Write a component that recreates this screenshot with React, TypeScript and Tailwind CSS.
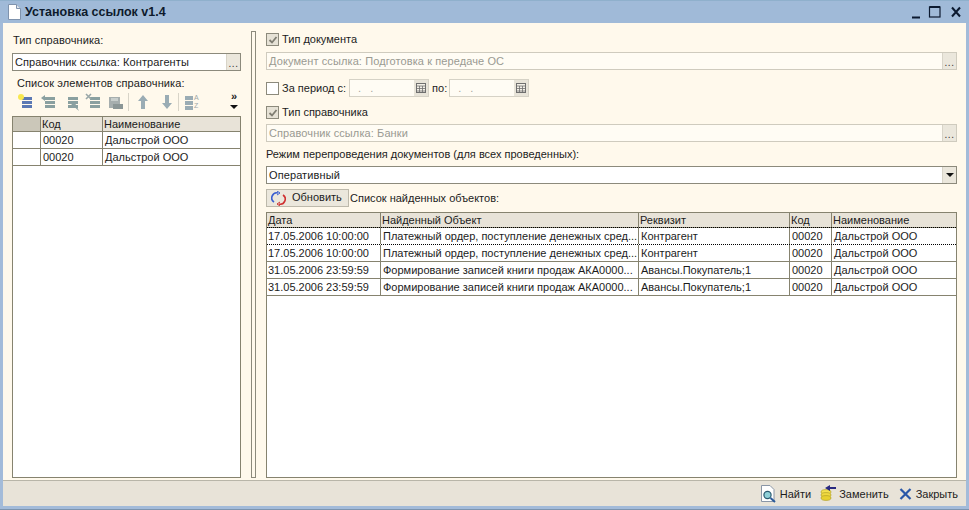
import React from "react";

const font = { fontFamily: '"Liberation Sans", Arial, sans-serif' };

function Dots() {
  return <span className="text-[10px] leading-none text-[#333] tracking-[0.5px] mt-[3px]">...</span>;
}

function Field({ text, muted, last }: { text: string; muted?: boolean; last?: React.ReactNode }) {
  return (
    <div className={`h-[18px] flex border ${muted ? "border-[#cfcbbe] bg-[#fffcf4] text-[#9a9a92]" : "bg-white text-[#1c1c1c] border-[#8c8a7c]"}`}>
      <div className="flex-1 pl-[2px] leading-[16px] tracking-[0.1px] whitespace-nowrap overflow-hidden">{text}</div>
      <div className="w-[14px] bg-[#ebe7dc] border-l border-[#d8d4c8] flex items-center justify-center">{last ?? <Dots />}</div>
    </div>
  );
}

function Check({ checked }: { checked?: boolean }) {
  return (
    <div className={`w-[13px] h-[13px] shrink-0 border border-[#8c8a7c] flex items-center justify-center ${checked ? "bg-[#e6e2d6]" : "bg-white"}`}>
      {checked && (
        <svg width="10" height="10" viewBox="0 0 10 10" fill="none" stroke="#7f7d72" strokeWidth="1.8">
          <path d="M1.5 5 L4 7.5 L8.5 2" />
        </svg>
      )}
    </div>
  );
}

function Calendar() {
  return (
    <svg width="10" height="10" viewBox="0 0 10 10" fill="none" stroke="#6f6f6f" strokeWidth="1">
      <rect x="0.5" y="0.5" width="9" height="9" fill="#f4f1e8" />
      <path d="M0 3H10M0 5.5H10M0 8H10M3.5 3V10M6.5 3V10" strokeWidth="0.8" />
    </svg>
  );
}

function DateField() {
  return (
    <div className="h-[18px] w-[80px] flex border border-[#d6d2c6] bg-[#fffcf4] text-[#a5a59d]">
      <div className="flex-1 pl-[8px] leading-[16px] tracking-[3px]">. .</div>
      <div className="w-[14px] bg-[#e8e4d9] flex items-center justify-center"><Calendar /></div>
    </div>
  );
}

function Bars({ color = "#8aa0a0" }: { color?: string }) {
  return <path d="M5 4H15V7H5ZM5 8H15V11H5ZM5 12H15V15H5Z" fill={color} />;
}

function Tb({ children, w = 16 }: { children: React.ReactNode; w?: number }) {
  return <svg width={w} height="18" viewBox={`0 0 ${w} 18`} className="shrink-0">{children}</svg>;
}

function Toolbar() {
  return (
    <div className="h-[20px] mt-[2px] flex items-center pl-[5px] relative">
      <Tb><Bars color="#5a78b4" /><circle cx="4" cy="4" r="3" fill="#f8e850" /></Tb>
      <div className="w-[7px]" />
      <Tb><Bars /><path d="M1 5L5 2V8Z" fill="#8aa0a0" /></Tb>
      <div className="w-[7px]" />
      <Tb><Bars /><path d="M8 11L16 18L12 10Z" fill="#8aa0a0" /></Tb>
      <div className="w-[6px]" />
      <Tb><Bars /><path d="M1 1L6 6M6 1L1 6" stroke="#9aa8a8" strokeWidth="1.6" /></Tb>
      <div className="w-[7px]" />
      <Tb w={16}><rect x="1" y="4" width="11" height="11" fill="#a6aeae" /><rect x="3" y="5" width="7" height="3" fill="#c8cecc" /><path d="M5 11H15V16H5Z" fill="#8b9696" /></Tb>
      <div className="w-[5px] h-[18px] mr-[7px] border-r border-[#d8d4c8]" />
      <Tb w={14}><path d="M7 2L12 8H9V16H5V8H2Z" fill="#9aacb4" /></Tb>
      <div className="w-[10px]" />
      <Tb w={14}><path d="M7 16L12 10H9V2H5V10H2Z" fill="#9aacb4" /></Tb>
      <div className="w-[5px] h-[18px] mr-[3px] border-r border-[#d8d4c8]" />
      <Tb w={19}><path d="M3 3H11V7H3ZM3 8H11V12H3ZM3 13H11V17H3Z" fill="#9aacb4" /><text x="12" y="7" fontSize="7" fill="#a0a8a8" style={font}>A</text><text x="12" y="15" fontSize="7" fill="#a0a8a8" style={font}>Z</text></Tb>
      <div className="absolute left-[217px] top-[-2px] w-[10px] flex flex-col items-center">
        <span className="text-[11px] font-bold leading-[12px] text-[#222]">»</span>
        <svg width="8" height="5" className="mt-[3px]"><path d="M0 0H8L4 4Z" fill="#111" /></svg>
      </div>
    </div>
  );
}

function LeftTable() {
  const rows = [["", "00020", "Дальстрой ООО"], ["", "00020", "Дальстрой ООО"]];
  return (
    <div className="flex-1 mt-[4px] mb-[2px] border border-[#86836f] bg-white">
      <div className="grid grid-cols-[28px_62px_1fr] h-[15px] bg-[#e8e3d8] border-b border-[#86836f] leading-[14px]">
        <div className="border-r border-[#86836f] bg-[#cbc7b9]" />
        <div className="border-r border-[#86836f] pl-[1px]">Код</div>
        <div className="pl-[1px]">Наименование</div>
      </div>
      {rows.map((r, i) => (
        <div key={i} className="grid grid-cols-[28px_62px_1fr] h-[17px] border-b border-[#86836f] leading-[16px]">
          <div className="border-r border-[#86836f]" />
          <div className="border-r border-[#86836f] pl-[2px]">{r[1]}</div>
          <div className="pl-[2px]">{r[2]}</div>
        </div>
      ))}
    </div>
  );
}

function RightTable() {
  const cols = "grid grid-cols-[114px_258px_151px_42px_1fr]";
  const rows = [
    ["17.05.2006 10:00:00", "Платежный ордер, поступление денежных сред...", "Контрагент", "00020", "Дальстрой ООО"],
    ["17.05.2006 10:00:00", "Платежный ордер, поступление денежных сред...", "Контрагент", "00020", "Дальстрой ООО"],
    ["31.05.2006 23:59:59", "Формирование записей книги продаж АКА0000...", "Авансы.Покупатель;1", "00020", "Дальстрой ООО"],
    ["31.05.2006 23:59:59", "Формирование записей книги продаж АКА0000...", "Авансы.Покупатель;1", "00020", "Дальстрой ООО"],
  ];
  const head = ["Дата", "Найденный Объект", "Реквизит", "Код", "Наименование"];
  return (
    <div className="flex-1 mt-[5px] mb-[2px] border border-[#86836f] bg-white">
      <div className={`${cols} h-[15px] bg-[#e8e3d8] border-b border-[#86836f] leading-[14px]`}>
        {head.map((h, i) => (
          <div key={h} className={`pl-[1px] whitespace-nowrap ${i < 4 ? "border-r border-[#86836f]" : ""}`}>{h}</div>
        ))}
      </div>
      {rows.map((r, i) => (
        <div key={i} className={`${cols} h-[17px] border-b leading-[16px] relative ${i === 0 ? "border-black border-dotted border-t -mt-[1px] h-[18px]" : "border-[#86836f]"}`}>
          {r.map((c, j) => (
            <div key={j} className={`${j === 0 ? "pl-[1px]" : "pl-[2px]"} whitespace-nowrap overflow-hidden ${j < 4 ? "border-r border-[#86836f]" : ""}`}>{c}</div>
          ))}
        </div>
      ))}
    </div>
  );
}

export default function App() {
  return (
    <div className="w-[969px] h-[510px] flex flex-col overflow-hidden bg-[#a3bbd9] text-[#1c1c1c] text-[11px]" style={font}>
      <div className="h-[23px] shrink-0 flex items-center bg-[#a0bad8] border-t border-[#8fb0cc] pl-[8px] pr-[5px]">
        <svg width="13" height="16" viewBox="0 0 13 16" className="shrink-0">
          <path d="M0.5 0.5H8.5L12.5 4.5V15.5H0.5Z" fill="#fff" stroke="#7f93ad" />
          <path d="M8.5 0.5V4.5H12.5" fill="#dfe6ee" stroke="#7f93ad" />
        </svg>
        <div className="ml-[4px] font-bold text-[12.5px] text-[#0e1a2c]">Установка ссылок v1.4</div>
        <div className="ml-auto flex items-center">
          <svg width="52" height="14" viewBox="0 0 52 14" fill="none" stroke="#0c1a30">
            <path d="M0 12.5H8" strokeWidth="2" />
            <rect x="17.5" y="2" width="10.5" height="10" strokeWidth="1.2" />
            <path d="M17.5 2H28" strokeWidth="2" />
            <path d="M40 2.5L48 11.5M48 2.5L40 11.5" strokeWidth="2" />
          </svg>
        </div>
      </div>
      <div className="mx-[3px] flex-1 min-h-0 flex flex-col bg-[#fff9ec]">
        <div className="flex-1 min-h-0 flex pl-[9px] pr-[9px] pt-[9px]">
          <div className="w-[229px] shrink-0 flex flex-col">
            <div className="h-[15px] leading-[15px] mt-[1px] pl-[1px] tracking-[0.1px]">Тип справочника:</div>
            <div className="mt-[5px]"><Field text="Справочник ссылка: Контрагенты" /></div>
            <div className="h-[14px] leading-[14px] mt-[5px] pl-[5px] tracking-[0.1px]">Список элементов справочника:</div>
            <Toolbar />
            <LeftTable />
          </div>
          <div className="w-[5px] ml-[10px] mb-[2px] -mt-[1px] border border-[#8c8a7c] shrink-0" />
          <div className="ml-[10px] flex-1 flex flex-col min-w-0">
            <div className="h-[15px] flex items-center gap-[3px]"><Check checked /><span>Тип документа</span></div>
            <div className="mt-[5px]"><Field text="Документ ссылка: Подготовка к передаче ОС" muted /></div>
            <div className="mt-[9px] h-[18px] flex items-center">
              <Check /><span className="ml-[3px]">За период с:</span>
              <div className="ml-[3px]"><DateField /></div>
              <span className="ml-[3px]">по:</span>
              <div className="ml-[2px]"><DateField /></div>
            </div>
            <div className="mt-[8px] h-[15px] flex items-center gap-[3px]"><Check checked /><span>Тип справочника</span></div>
            <div className="mt-[4px]"><Field text="Справочник ссылка: Банки" muted /></div>
            <div className="mt-[5px] h-[14px] leading-[14px]">Режим перепроведения документов (для всех проведенных):</div>
            <div className="mt-[5px]">
              <Field text="Оперативный" last={<svg width="8" height="5"><path d="M0 0H8L4 4Z" fill="#111" /></svg>} />
            </div>
            <div className="mt-[5px] h-[18px] flex items-center">
              <div className="w-[83px] h-[18px] flex items-center bg-[#ebe7dc] border border-[#bdb9ab] pl-[4px]">
                <svg width="15" height="15" viewBox="0 0 15 15" fill="none" strokeWidth="1.6">
                  <path d="M3 11A5 5 0 0 1 7 2" stroke="#3a5ed0" />
                  <path d="M12 4A5 5 0 0 1 8 13" stroke="#d03030" />
                  <path d="M6 0L9 2L6 4" stroke="#3a5ed0" strokeWidth="1" />
                  <path d="M9 11L6 13L9 15" stroke="#d03030" strokeWidth="1" />
                </svg>
                <span className="ml-[6px] -mt-[1px]">Обновить</span>
              </div>
              <span className="ml-[1px]">Список найденных объектов:</span>
            </div>
            <RightTable />
          </div>
        </div>
        <div className="h-[26px] shrink-0 bg-[#e8e3d8] border-t border-[#b8b5a8] flex items-center justify-end pr-[8px] pt-[1px]">
          <svg width="17" height="18" viewBox="0 0 17 18" className="shrink-0">
            <path d="M0.5 0.5H9L13 4.5V16.5H0.5Z" fill="#fff" stroke="#8a96a6" />
            <circle cx="6.5" cy="10" r="3.6" fill="#8fd0d8" stroke="#2a5a70" strokeWidth="1.2" />
            <path d="M9.5 13L14 17" stroke="#2a5a9a" strokeWidth="2" />
          </svg>
          <span className="ml-[2px]">Найти</span>
          <svg width="16" height="18" viewBox="0 0 16 18" className="ml-[9px] shrink-0">
            <ellipse cx="6" cy="7" rx="5" ry="2.4" fill="#f4e050" stroke="#a89820" strokeWidth="0.6" />
            <ellipse cx="6" cy="10" rx="5" ry="2.4" fill="#f0d840" stroke="#a89820" strokeWidth="0.6" />
            <ellipse cx="6" cy="13" rx="5" ry="2.4" fill="#e8d030" stroke="#a89820" strokeWidth="0.6" />
            <path d="M5 3L10 0V2H16V4H10V6Z" fill="#2a2a80" />
          </svg>
          <span className="ml-[3px]">Заменить</span>
          <svg width="13" height="12" viewBox="0 0 13 12" className="ml-[10px] shrink-0" stroke="#2a58a8" strokeWidth="2.2">
            <path d="M1.5 1L11.5 11M11.5 1L1.5 11" />
          </svg>
          <span className="ml-[4px]">Закрыть</span>
        </div>
      </div>
      <div className="h-[4px] shrink-0 bg-[#a3bbd9] border-b border-[#7d94ae]" />
    </div>
  );
}
